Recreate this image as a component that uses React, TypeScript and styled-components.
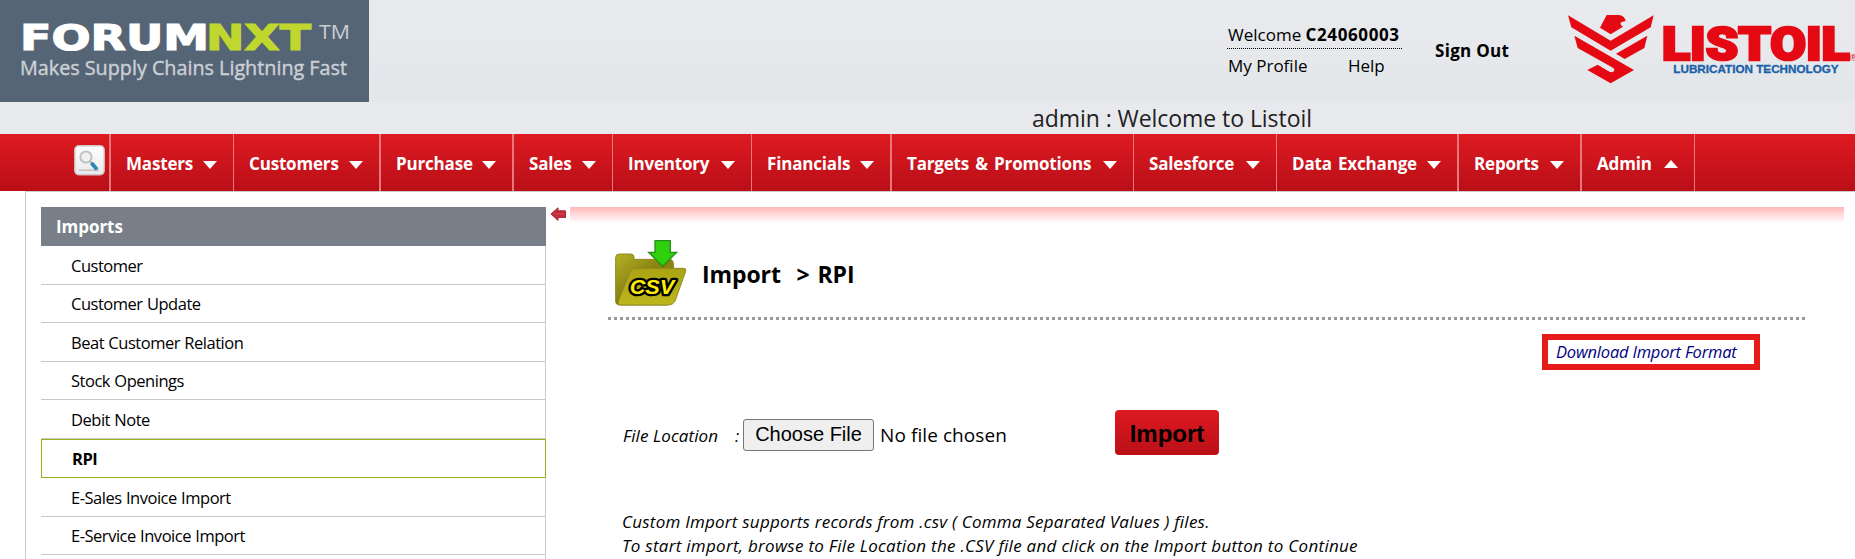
import React from 'react';
import styled, { createGlobalStyle, css } from 'styled-components';

const Global = createGlobalStyle`
  * { box-sizing: border-box; }
  html, body { margin: 0; background: #fff; }
  body { font-family: "Open Sans", "Noto Sans", sans-serif; font-size: 17px; color: #000; overflow: hidden; }
`;

const Page = styled.div`
  width: 1855px;
  height: 559px;
  overflow: hidden;
  display: flex;
  flex-direction: column;
`;

const Header = styled.header`
  display: flex;
  height: 102px;
  flex: none;
  background: linear-gradient(#e8e9ed 35%, #e3e7ea 85%);
`;

const Brand = styled.div`
  width: 369px;
  height: 102px;
  background: #566576;
`;

const UserBlock = styled.div`
  width: 175px;
  margin-left: auto;
  padding-top: 21px;
`;

const WelcomeLine = styled.div`
  height: 28px;
  padding-left: 1px;
  line-height: 28px;
  border-bottom: 1px dotted #000;
  white-space: nowrap;
  letter-spacing: 0;
`;

const UserCode = styled.b`
  letter-spacing: 0.6px;
`;

const UserLinks = styled.nav`
  display: flex;
  padding-left: 1px;
  line-height: 34px;
  letter-spacing: 0;
  white-space: nowrap;
`;

const UserLink = styled.a<{ $width?: number }>`
  width: ${(p) => (p.$width ? `${p.$width}px` : 'auto')};
`;

const SignOut = styled.a`
  width: 138px;
  padding-left: 33px;
  line-height: 102px;
  font-weight: 700;
  letter-spacing: 0.3px;
  white-space: nowrap;
`;

const Greeting = styled.div`
  height: 32px;
  flex: none;
  padding-left: 1032px;
  background: #e8e9ed;
  color: #222;
  font-size: 23px;
  line-height: 33px;
  letter-spacing: -0.06px;
  white-space: nowrap;
`;

const NavBar = styled.nav`
  display: flex;
  height: 57px;
  flex: none;
  background: linear-gradient(#de1a22, #b90f17);
`;

const SearchSlot = styled.div`
  width: 109px;
  padding: 11px 0 0 74px;
`;

const NavItem = styled.a<{ $width: number; $edge: number }>`
  display: flex;
  align-items: center;
  justify-content: space-between;
  width: ${(p) => p.$width}px;
  padding: 2px 16px 0 15px;
  border-left: ${(p) => p.$edge}px solid #e9777b;
  color: #fff;
  font-weight: 700;
  letter-spacing: -0.18px;
  word-spacing: 2px;
  line-height: 55px;
  white-space: nowrap;
  &:last-child { border-right: 1px solid #e9777b; }
`;

const Caret = styled.span<{ $up?: boolean }>`
  border: 7px solid transparent;
  ${(p) =>
    p.$up
      ? css`border-top: 0; border-bottom: 8px solid #fff;`
      : css`border-bottom: 0; border-top: 8px solid #fff; margin-top: 2px;`}
`;

const Body = styled.main`
  display: flex;
  align-items: flex-start;
  flex: 1;
  margin-left: 25px;
  padding: 15px 0 0 15px;
  border-left: 1px solid #ccc;
  border-top: 1px solid #ccc;
`;

const Sidebar = styled.aside`
  width: 505px;
  height: 360px;
  flex: none;
  border-right: 1px solid #ccc;
`;

const SidebarTitle = styled.h2`
  width: 505px;
  height: 39px;
  margin: 0;
  padding-left: 15px;
  background: #787f88;
  color: #fff;
  font-size: 17px;
  line-height: 40px;
  letter-spacing: -0.05px;
`;

const SidebarItem = styled.a<{ $height: number; $active?: boolean }>`
  display: flex;
  align-items: center;
  height: ${(p) => p.$height}px;
  padding-left: 30px;
  border-bottom: 1px solid #c8c8c8;
  font-size: 16.5px;
  letter-spacing: -0.48px;
  word-spacing: 0.5px;
  ${(p) =>
    p.$active &&
    css`
      width: 505px;
      border: 1px solid #98b41c;
      font-weight: 700;
    `}
`;

const CollapseSlot = styled.div`
  width: 24px;
  flex: none;
  padding-left: 4px;
  line-height: 0;
`;

const Content = styled.section`
  width: 1274px;
  flex: none;
`;

const TopGlow = styled.div`
  height: 16px;
  background: linear-gradient(#ffb9b9, #fff);
`;

const TitleRow = styled.div`
  display: flex;
  height: 94px;
  margin: 0 37px;
  padding: 16px 0 0 8px;
`;

const Title = styled.h1`
  margin: 0 0 0 15px;
  font-size: 23px;
  line-height: 71px;
  letter-spacing: -0.1px;
  word-spacing: 2px;
  white-space: pre;
`;

const DottedRule = styled.div`
  height: 3px;
  margin: 0 37px;
  background: repeating-linear-gradient(90deg, #999 0 3px, transparent 3px 6px) 1px 0;
`;

const DownloadBox = styled.a`
  display: block;
  width: 218px;
  height: 36px;
  margin: 14px 0 0 972px;
  padding-left: 8px;
  border: 6px solid #e81b1b;
  color: #000080;
  font-size: 16.5px;
  font-style: italic;
  line-height: 23px;
  letter-spacing: -0.2px;
  white-space: nowrap;
`;

const FormRow = styled.div`
  display: flex;
  align-items: center;
  height: 45px;
  margin: 40px 0 0 53px;
  white-space: nowrap;
`;

const FieldLabel = styled.label`
  width: 112px;
  padding-top: 5px;
  font-size: 17px;
  font-style: italic;
  letter-spacing: 0.1px;
`;

const Colon = styled.span`
  width: 8px;
  padding-top: 5px;
  font-style: italic;
`;

const ChooseFile = styled.button`
  width: 131px;
  height: 32px;
  margin-top: 5px;
  padding: 0 0 1px;
  border: 1px solid #767676;
  border-radius: 3px;
  background: #efefef;
  color: #000;
  font: 20px "Liberation Sans", Arial, sans-serif;
`;

const FileStatus = styled.span`
  width: 241px;
  padding: 5px 0 0 6px;
  font-size: 19px;
  letter-spacing: 0.08px;
`;

const ImportButton = styled.button`
  width: 104px;
  height: 45px;
  padding: 2px 0 0;
  border: 0;
  border-radius: 4px;
  background: linear-gradient(#de1a22, #b90f17);
  color: #000;
  font: 700 24px "Liberation Sans", Arial, sans-serif;
`;

const Notes = styled.div`
  margin: 55px 0 0 52px;
  font-size: 17px;
  font-style: italic;
  line-height: 24px;
  white-space: nowrap;
`;

const NoteLine = styled.p<{ $spacing: number }>`
  margin: 0;
  letter-spacing: ${(p) => p.$spacing}px;
`;

const BrandLogo = () => (
  <svg width="369" height="102" viewBox="0 0 369 102">
    <g fontFamily="DejaVu Sans" fontWeight="700" fontSize="36">
      <text x="20" y="49.5" fill="#fff" stroke="#fff" strokeWidth="1.2" textLength="189" lengthAdjust="spacingAndGlyphs">FORUM</text>
      <text x="206" y="49.5" fill="#bfd72f" stroke="#bfd72f" strokeWidth="1.2" textLength="105" lengthAdjust="spacingAndGlyphs">NXT</text>
    </g>
    <text x="319" y="39" fill="#c9ced4" fontFamily="Open Sans" fontSize="20" textLength="31" lengthAdjust="spacingAndGlyphs">TM</text>
    <text x="20" y="75" fill="#ccd1d7" fontFamily="Open Sans" fontSize="20.5" stroke="#ccd1d7" strokeWidth="0.4" textLength="327" lengthAdjust="spacingAndGlyphs">Makes Supply Chains Lightning Fast</text>
  </svg>
);

const ListoilLogo = () => (
  <svg width="315" height="102" viewBox="0 0 945 306">
    <g fill="#e50914">
      <path d="M200 45H238Q254 48 257 63L243 67Q238 74 249 80L212 103L180 83Z" />
      <path d="M84 46L212 122L341 46L332 82L212 152L94 82Z" />
      <path d="M103 107L282 210L212 250L142 210L173 194L203 212Q212 219 220 215Q228 208 216 202L113 144Z" />
      <path d="M322 107L313 144L254 177L228 161Z" />
    </g>
    <text x="366" y="181" fill="#e50914" stroke="#e50914" strokeWidth="8" fontFamily="Roboto" fontWeight="900" fontSize="139" textLength="563" lengthAdjust="spacingAndGlyphs">LISTOIL</text>
    <text x="400" y="219" fill="#1b61a8" stroke="#1b61a8" strokeWidth="1" fontFamily="Liberation Sans" fontWeight="700" fontSize="34" textLength="496" lengthAdjust="spacingAndGlyphs">LUBRICATION TECHNOLOGY</text>
    <text x="930" y="183" fill="#e50914" fontFamily="Liberation Sans" fontSize="28">®</text>
  </svg>
);

const SearchIcon = () => (
  <svg width="31" height="31" viewBox="0 0 31 31">
    <defs>
      <linearGradient id="tile" x1="0" y1="0" x2="0" y2="1">
        <stop offset="0" stopColor="#fff" />
        <stop offset="1" stopColor="#e9e9e9" />
      </linearGradient>
    </defs>
    <rect x="0.8" y="0.8" width="29.4" height="29" rx="4" fill="url(#tile)" stroke="#cfc3c3" strokeWidth="1.4" />
    <path d="M5 25.2H25" stroke="#c4c4c4" strokeWidth="1.6" />
    <path d="M15.5 16L18 18.5" stroke="#aaa" strokeWidth="2" />
    <path d="M17.5 18L23 24.5" stroke="#2a86b8" strokeWidth="3.6" />
    <circle cx="12" cy="12" r="5.6" fill="#f1f1f1" stroke="#c2c2c2" strokeWidth="2" />
  </svg>
);

const CollapseIcon = () => (
  <svg width="17" height="15" viewBox="0 0 17 15">
    <path d="M1 7L8 0.8V3.8H15.5V10.5H8V13.4Z" fill="#c42c3a" stroke="#a82532" strokeWidth="1" />
    <path d="M4 7H15" stroke="#d04a56" strokeWidth="1" />
  </svg>
);

const CsvFolderIcon = () => (
  <svg width="72" height="68" viewBox="105 42 216 204">
    <defs>
      <linearGradient id="back" x1="0" y1="0" x2="1" y2="1">
        <stop offset="0" stopColor="#b5b024" />
        <stop offset="0.5" stopColor="#868012" />
        <stop offset="1" stopColor="#9a9418" />
      </linearGradient>
      <linearGradient id="front" x1="0" y1="0" x2="0" y2="1">
        <stop offset="0" stopColor="#aaa312" />
        <stop offset="1" stopColor="#bdb61c" />
      </linearGradient>
    </defs>
    <path d="M107 228V98Q107 87 118 87H152Q162 87 162 96V103H272Q282 106 281 130V200L262 240H120Q107 240 107 228Z" fill="url(#back)" stroke="#8e8a20" strokeWidth="3" />
    <path d="M151 138Q154 130 164 130H312Q320 131 317 139L286 226Q280 240 264 240H122Q111 238 116 226Z" fill="url(#front)" stroke="#8e8a20" strokeWidth="3" />
    <path d="M225 47H271V82H290L248 124L206 82H225Z" fill="#2fd00c" stroke="#259018" strokeWidth="4" />
    <text x="149" y="207" fontFamily="Liberation Sans" fontWeight="700" fontStyle="italic" fontSize="62" fill="#ffee0a" stroke="#000" strokeWidth="14" strokeLinejoin="round" paintOrder="stroke" textLength="134" lengthAdjust="spacingAndGlyphs">CSV</text>
  </svg>
);

const navItems = [
  { label: 'Masters', width: 124, edge: 2 },
  { label: 'Customers', width: 146, edge: 1 },
  { label: 'Purchase', width: 133, edge: 2 },
  { label: 'Sales', width: 100, edge: 2 },
  { label: 'Inventory', width: 139, edge: 1 },
  { label: 'Financials', width: 139, edge: 1 },
  { label: 'Targets & Promotions', width: 243, edge: 2 },
  { label: 'Salesforce', width: 143, edge: 1 },
  { label: 'Data Exchange', width: 181, edge: 1 },
  { label: 'Reports', width: 123, edge: 2 },
  { label: 'Admin', width: 115, edge: 2, up: true },
];

const sidebarItems = [
  { label: 'Customer', height: 39 },
  { label: 'Customer Update', height: 38 },
  { label: 'Beat Customer Relation', height: 39 },
  { label: 'Stock Openings', height: 38 },
  { label: 'Debit Note', height: 39 },
  { label: 'RPI', height: 39, active: true },
  { label: 'E-Sales Invoice Import', height: 39 },
  { label: 'E-Service Invoice Import', height: 38 },
];

export default function App() {
  return (
    <Page>
      <Global />
      <Header>
        <Brand><BrandLogo /></Brand>
        <UserBlock>
          <WelcomeLine>Welcome <UserCode>C24060003</UserCode></WelcomeLine>
          <UserLinks>
            <UserLink $width={120}>My Profile</UserLink>
            <UserLink>Help</UserLink>
          </UserLinks>
        </UserBlock>
        <SignOut>Sign Out</SignOut>
        <ListoilLogo />
      </Header>
      <Greeting>admin : Welcome to Listoil</Greeting>
      <NavBar>
        <SearchSlot><SearchIcon /></SearchSlot>
        {navItems.map((item) => (
          <NavItem key={item.label} $width={item.width} $edge={item.edge}>
            {item.label}
            <Caret $up={item.up} />
          </NavItem>
        ))}
      </NavBar>
      <Body>
        <Sidebar>
          <SidebarTitle>Imports</SidebarTitle>
          {sidebarItems.map((item) => (
            <SidebarItem key={item.label} $height={item.height} $active={item.active}>
              {item.label}
            </SidebarItem>
          ))}
        </Sidebar>
        <CollapseSlot><CollapseIcon /></CollapseSlot>
        <Content>
          <TopGlow />
          <TitleRow>
            <CsvFolderIcon />
            <Title>Import  &gt; RPI</Title>
          </TitleRow>
          <DottedRule />
          <DownloadBox>Download Import Format</DownloadBox>
          <FormRow>
            <FieldLabel>File Location</FieldLabel>
            <Colon>:</Colon>
            <ChooseFile>Choose File</ChooseFile>
            <FileStatus>No file chosen</FileStatus>
            <ImportButton>Import</ImportButton>
          </FormRow>
          <Notes>
            <NoteLine $spacing={0.23}>Custom Import supports records from .csv ( Comma Separated Values ) files.</NoteLine>
            <NoteLine $spacing={0.28}>To start import, browse to File Location the .CSV file and click on the Import button to Continue</NoteLine>
          </Notes>
        </Content>
      </Body>
    </Page>
  );
}
